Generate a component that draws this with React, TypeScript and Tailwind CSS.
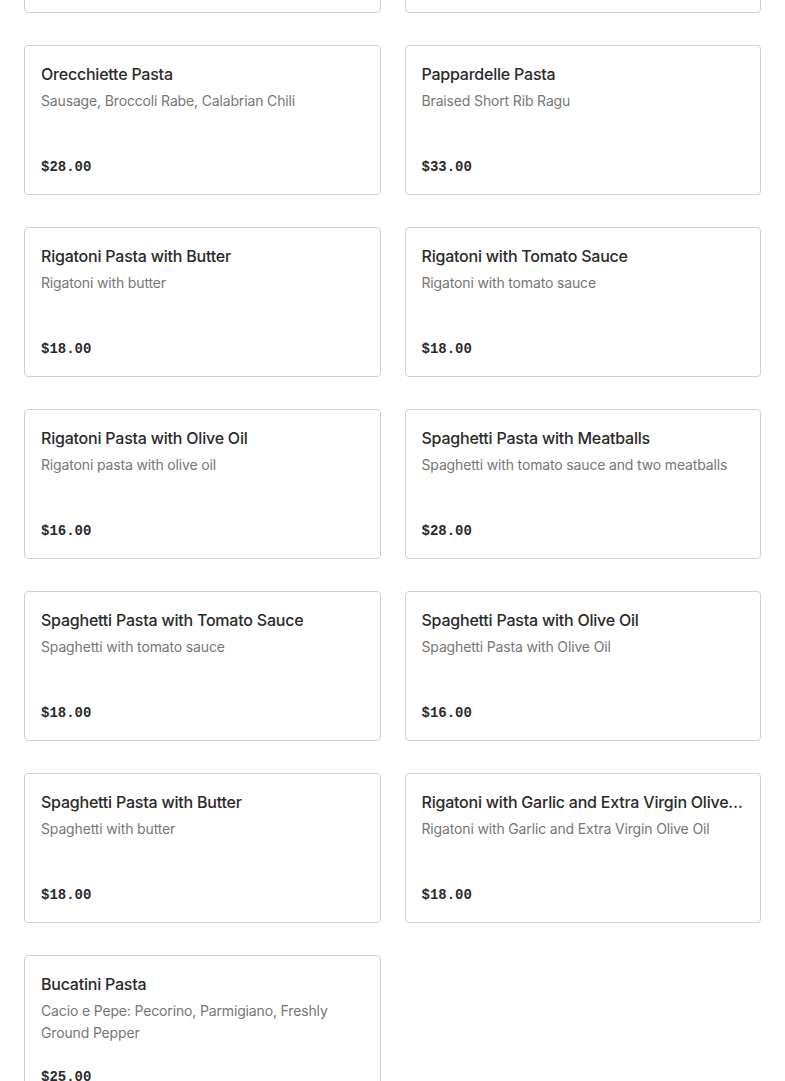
import React from "react";

type Item = {
  name: string;
  description: string;
  price: string;
};

const items: Item[] = [
  { name: "Orecchiette Pasta", description: "Sausage, Broccoli Rabe, Calabrian Chili", price: "$28.00" },
  { name: "Pappardelle Pasta", description: "Braised Short Rib Ragu", price: "$33.00" },
  { name: "Rigatoni Pasta with Butter", description: "Rigatoni with butter", price: "$18.00" },
  { name: "Rigatoni with Tomato Sauce", description: "Rigatoni with tomato sauce", price: "$18.00" },
  { name: "Rigatoni Pasta with Olive Oil", description: "Rigatoni pasta with olive oil", price: "$16.00" },
  { name: "Spaghetti Pasta with Meatballs", description: "Spaghetti with tomato sauce and two meatballs", price: "$28.00" },
  { name: "Spaghetti Pasta with Tomato Sauce", description: "Spaghetti with tomato sauce", price: "$18.00" },
  { name: "Spaghetti Pasta with Olive Oil", description: "Spaghetti Pasta with Olive Oil", price: "$16.00" },
  { name: "Spaghetti Pasta with Butter", description: "Spaghetti with butter", price: "$18.00" },
  { name: "Rigatoni with Garlic and Extra Virgin Olive Oil", description: "Rigatoni with Garlic and Extra Virgin Olive Oil", price: "$18.00" },
  { name: "Bucatini Pasta", description: "Cacio e Pepe: Pecorino, Parmigiano, Freshly Ground Pepper", price: "$25.00" },
];

const MenuCard = ({ item }: { item: Item }) => (
  <div className="flex flex-col border border-[#d0d0d0] rounded-[4px] bg-white p-4 min-h-[150px]">
    <h3 className="truncate text-[16px] leading-6 font-medium text-[#2a2a2a] font-['Inter',sans-serif] tracking-[-0.22px]">
      {item.name}
    </h3>
    <p className="mt-1 min-h-[44px] text-[14px] leading-[22px] text-[#767676] font-['Inter',sans-serif] tracking-[-0.15px]">
      {item.description}
    </p>
    <div className="mt-[22px] text-[14px] leading-[22px] font-bold text-[#2a2a2a] font-['Liberation_Mono',monospace]">
      {item.price}
    </div>
  </div>
);

export default function App() {
  return (
    <div className="min-h-screen bg-white overflow-hidden">
      <div className="px-6 -mt-[137px] grid grid-cols-2 gap-x-6 gap-y-8 pb-8">
        {/* previous row, scrolled out of view */}
        <div className="h-[150px] border border-[#d0d0d0] rounded-[4px] bg-white" />
        <div className="h-[150px] border border-[#d0d0d0] rounded-[4px] bg-white" />
        {items.map((item, i) => (
          <MenuCard key={i} item={item} />
        ))}
      </div>
    </div>
  );
}
